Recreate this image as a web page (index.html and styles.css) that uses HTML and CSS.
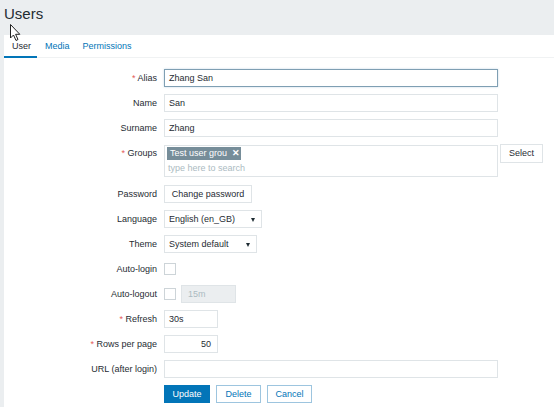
FILE: index.html
```html
<!DOCTYPE html>
<html>
<head>
<meta charset="utf-8">
<link rel="stylesheet" href="styles.css">
</head>
<body>
<header class="page-header"><h1>Users</h1></header>
<main class="panel">
  <nav class="tabs">
    <a class="tab active">User</a>
    <a class="tab">Media</a>
    <a class="tab">Permissions</a>
  </nav>
  <form class="form-grid">
    <div class="lbl"><span class="req">*</span> Alias</div>
    <div class="field"><div class="inp wide focus">Zhang San</div></div>

    <div class="lbl">Name</div>
    <div class="field"><div class="inp wide">San</div></div>

    <div class="lbl">Surname</div>
    <div class="field"><div class="inp wide">Zhang</div></div>

    <div class="lbl lbl-top"><span class="req">*</span> Groups</div>
    <div class="field field-top">
      <div class="multi">
        <div class="tags"><span class="tag">Test user grou <span class="tag-x">✕</span></span></div>
        <div class="ph">type here to search</div>
      </div>
      <div class="btn btn-grey select">Select</div>
    </div>

    <div class="lbl">Password</div>
    <div class="field"><div class="btn btn-grey chpw">Change password</div></div>

    <div class="lbl">Language</div>
    <div class="field"><div class="inp sel lang">English (en_GB)<span class="arrow"></span></div></div>

    <div class="lbl">Theme</div>
    <div class="field"><div class="inp sel theme">System default<span class="arrow"></span></div></div>

    <div class="lbl">Auto-login</div>
    <div class="field"><span class="chk"></span></div>

    <div class="lbl">Auto-logout</div>
    <div class="field"><span class="chk"></span><div class="inp short disabled">15m</div></div>

    <div class="lbl"><span class="req">*</span> Refresh</div>
    <div class="field"><div class="inp short2">30s</div></div>

    <div class="lbl"><span class="req">*</span> Rows per page</div>
    <div class="field"><div class="inp short2 right">50</div></div>

    <div class="lbl">URL (after login)</div>
    <div class="field"><div class="inp wide"></div></div>

    <div class="lbl"></div>
    <div class="field buttons">
      <div class="btn btn-main">Update</div>
      <div class="btn btn-alt">Delete</div>
      <div class="btn btn-alt">Cancel</div>
    </div>
  </form>
</main>
<svg class="cursor" width="12" height="18" viewBox="0 0 12 18">
  <path d="M0.5 0.5 L0.5 14 L3.5 11 L6 16.5 L8 15.5 L5.6 10.3 L9.8 10.3 Z" fill="#fff" stroke="#222" stroke-width="1" stroke-linejoin="round"/>
</svg>
</body>
</html>
```

FILE: styles.css
```css
html, body {
  margin: 0;
  padding: 0;
}
body {
  background: #ebeef0;
  font-family: "Liberation Sans", Arial, sans-serif;
  font-size: 9px;
  color: #1f2c33;
  width: 554px;
  height: 407px;
  overflow: hidden;
  position: relative;
}
.page-header {
  height: 35px;
  padding: 0 4px;
  box-sizing: border-box;
}
.page-header h1 {
  margin: 0;
  padding-top: 5px;
  font-size: 15px;
  font-weight: normal;
  line-height: 17px;
  color: #1f2c33;
}
.panel {
  margin-left: 4px;
  background: #fff;
  height: 372px;
}
.tabs {
  display: flex;
  height: 23px;
  border-bottom: 1px solid #f0f2f3;
  box-sizing: border-box;
}
.tab {
  display: block;
  padding: 0 4px 0 8px;
  line-height: 23px;
  color: #0275b8;
  box-sizing: border-box;
  height: 23px;
}
.tab + .tab {
  padding-left: 4px;
  margin-left: 0;
}
.tab.active {
  color: #1f2c33;
  border-bottom: 2px solid #0275b8;
  line-height: 22px;
  width: 33px;
}
.tab:nth-child(2) { margin-left: 4px; }
.tab:nth-child(3) { margin-left: 5px; }

.form-grid {
  display: grid;
  grid-template-columns: 153px 1fr;
  column-gap: 7px;
  row-gap: 7px;
  padding-top: 11px;
  margin: 0;
}
.lbl {
  text-align: right;
  line-height: 18px;
  height: 18px;
  white-space: nowrap;
}
.req {
  color: #e45959;
}
.field {
  display: flex;
  align-items: center;
  gap: 5px;
  min-height: 18px;
}
.field-top {
  align-items: flex-start;
  gap: 2px;
  margin-bottom: 1px;
}
.inp {
  height: 18px;
  box-sizing: border-box;
  border: 1px solid #dfe4e7;
  background: #fff;
  padding: 0 4px;
  line-height: 16px;
  white-space: nowrap;
  position: relative;
}
.wide { width: 334px; }
.focus {
  border-color: #7f9fb3;
  box-shadow: 0 0 2px rgba(127, 170, 200, 0.45);
}
.sel.lang { width: 98px; }
.sel.theme { width: 93px; }
.arrow {
  position: absolute;
  right: 6px;
  top: 7px;
  width: 0;
  height: 0;
  border-left: 2.5px solid transparent;
  border-right: 2.5px solid transparent;
  border-top: 4px solid #1f2c33;
}
.short { width: 55px; }
.short2 { width: 54px; }
.right { text-align: right; padding-right: 6px; }
.disabled {
  background: #ebeef0;
  color: #acbbc2;
  border-color: #dfe4e7;
  padding-left: 6px;
}
.chk {
  display: block;
  width: 12px;
  height: 12px;
  box-sizing: border-box;
  border: 1px solid #cdd4d8;
  background: #fff;
}
.multi {
  width: 334px;
  height: 32px;
  box-sizing: border-box;
  border: 1px solid #dfe4e7;
  padding: 1px 2px;
  margin-top: 1px;
}
.tags {
  height: 14px;
  display: flex;
}
.tag {
  background: #768d99;
  color: #fff;
  line-height: 13px;
  height: 13px;
  padding: 0 3px 0 3px;
  width: 74px;
  box-sizing: border-box;
  white-space: nowrap;
  font-size: 9px;
}
.tag-x {
  font-weight: bold;
  margin-left: 2px;
}
.ph {
  color: #acbbc2;
  line-height: 14px;
  padding-left: 1px;
}
.btn {
  height: 18px;
  box-sizing: border-box;
  line-height: 16px;
  text-align: center;
  white-space: nowrap;
}
.btn-grey {
  border: 1px solid #dfe4e7;
  background: #fff;
  color: #1f2c33;
}
.select { width: 43px; height: 19px; line-height: 17px; }
.chpw { width: 88px; }
.buttons { gap: 6px; }
.btn-main {
  width: 46px;
  background: #0275b8;
  border: 1px solid #0275b8;
  color: #fff;
}
.btn-alt {
  width: 45px;
  background: #fff;
  border: 1px solid #9dc5df;
  color: #0275b8;
}
.cursor {
  position: absolute;
  left: 10px;
  top: 24px;
}
```
